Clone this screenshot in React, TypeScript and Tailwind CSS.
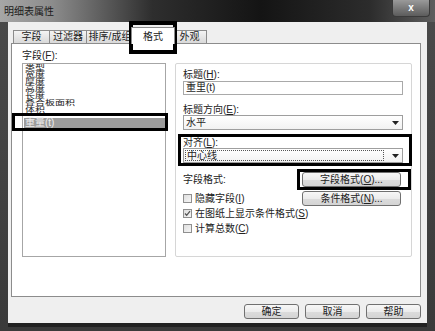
import React from 'react';

const font = "font-['Liberation_Sans','Noto_Sans_CJK_SC',sans-serif]";

const Btn: React.FC<{ label: React.ReactNode; className?: string }> = ({ label, className = '' }) => (
  <div
    className={`h-[15px] flex items-center justify-center rounded-[3px] border border-[#707070] bg-[linear-gradient(180deg,#f7f7f7_0%,#ececec_50%,#dcdcdc_51%,#d4d4d4_100%)] text-[10px] leading-none text-[#222] ${className}`}
  >
    {label}
  </div>
);

const Combo: React.FC<{ value: string; focused?: boolean }> = ({ value, focused }) => (
  <div className="h-[15px] w-full flex items-center border border-[#9e9e9e] bg-[linear-gradient(180deg,#ffffff_0%,#f2f2f2_100%)]">
    <div
      className={`flex-1 h-[11px] ml-[1px] mr-[8px] pl-[1px] flex items-center text-[10px] leading-none text-[#1e1e1e] ${
        focused ? 'border border-dotted border-[#555]' : ''
      }`}
    >
      {value}
    </div>
    <svg width="7" height="4" viewBox="0 0 7 4" className="mr-[3px]">
      <path d="M0 0h7L3.5 4z" fill="#222" />
    </svg>
  </div>
);

const Check: React.FC<{ label: React.ReactNode; checked?: boolean }> = ({ label, checked }) => (
  <div className="h-[15px] flex items-center gap-[3px] text-[10px] leading-none text-[#222]">
    <div className="w-[9px] h-[9px] border border-[#8f8f8f] bg-[linear-gradient(135deg,#dedede_0%,#f6f6f6_100%)] flex items-center justify-center">
      {checked && (
        <svg width="7" height="7" viewBox="0 0 7 7">
          <path d="M1 3.5l1.7 1.8L6 1.2" stroke="#555" strokeWidth="1.3" fill="none" />
        </svg>
      )}
    </div>
    <span>{label}</span>
  </div>
);

const Label: React.FC<{ children: React.ReactNode; className?: string }> = ({ children, className = '' }) => (
  <div className={`h-[11px] leading-[11px] text-[10px] text-[#222] ${className}`}>{children}</div>
);

const tabs = [
  { label: '字段', w: 'w-[36px]' },
  { label: '过滤器', w: 'w-[37px]' },
  { label: '排序/成组', w: 'w-[47px]' },
];

export default function App() {
  const fields = ['类型', '宽度', '厚度', '高度', '长度', '叠合板面积', '体积'];

  return (
    <div className={`relative w-[435px] h-[331px] overflow-hidden bg-[linear-gradient(180deg,#4a4a4a_0%,#3a3a3a_100%)] flex flex-col ${font}`}>
      {/* title bar */}
      <div className="h-[22px] shrink-0 flex items-start justify-between bg-[linear-gradient(90deg,#a6a6a6_0%,#8c8c8c_12%,#2e2e2e_35%,#141414_60%,#2c2c2c_85%,#5e5e5e_100%)]">
        <div className="pl-[4px] pt-[6px] text-[10px] leading-[11px] text-[#1a1a1a]">明细表属性</div>
        <div className="mr-[5px] w-[38px] h-[17px] rounded-b-[4px] border border-t-0 border-[#3a3a3a] bg-[linear-gradient(180deg,#9a9a9a_0%,#7a7a7a_50%,#5c5c5c_100%)] flex items-center justify-center text-white text-[10px] font-bold leading-none">
          x
        </div>
      </div>

      {/* client area */}
      <div className="mx-[8px] h-[301px] bg-[#efefef] flex flex-col pl-[3px] pr-[6px]">
        {/* tabs */}
        <div className="h-[21px] flex items-end pl-[2px]">
          {tabs.map((t) => (
            <div
              key={t.label}
              className={`${t.w} h-[13px] border border-b-0 border-r-0 border-[#8c8c8c] bg-[linear-gradient(180deg,#f4f4f4_0%,#e6e6e6_50%,#d9d9d9_100%)] flex items-center justify-center text-[10px] leading-none text-[#222] overflow-hidden whitespace-nowrap`}
            >
              {t.label}
            </div>
          ))}
          <div className="relative z-10 w-[44px] h-[17px] -mx-[2px] -mb-px border border-b-0 border-[#8c8c8c] bg-white flex items-start pt-[4px] justify-center text-[10px] leading-none text-[#222]">
            格式
          </div>
          <div className="w-[34px] h-[13px] border border-b-0 border-l-0 border-[#8c8c8c] bg-[linear-gradient(180deg,#f4f4f4_0%,#e6e6e6_50%,#d9d9d9_100%)] flex items-center justify-center text-[10px] leading-none text-[#222]">
            外观
          </div>
        </div>

        {/* panel */}
        <div className="h-[254px] border border-[#8c8c8c] bg-white flex gap-[9px] pl-[10px] pt-[6px]">
          <div className="w-[144px] flex flex-col">
            <div className="h-[13px] leading-[11px] text-[10px] text-[#222]">
              字段(<u>F</u>):
            </div>
            <div className="h-[194px] border border-[#a6a6a6] bg-white pl-[1px]">
              <div className="pl-[1px] text-[10px] text-[#222]">
                {fields.map((f) => (
                  <div key={f} className="h-[7px] leading-[7px] whitespace-nowrap">
                    <span className="inline-block origin-center scale-y-[0.68]">{f}</span>
                  </div>
                ))}
              </div>
              <div className="mt-[5px] h-[10px] leading-[10px] bg-[#9c9c9c] text-[10px] text-[#eeeeee] pl-[1px]">
                重量(t)
              </div>
            </div>
          </div>

          <div className="mt-[13px] w-[237px] h-[194px] border border-[#d6d6d6] rounded-[2px] pl-[7px] pr-[8px] pt-[5px] flex flex-col">
            <Label>
              标题(<u>H</u>):
            </Label>
            <div className="mt-[1px] h-[14px] border border-[#a9a9a9] bg-white flex items-center pl-[2px] text-[10px] leading-none text-[#1e1e1e]">
              重里(t)
            </div>
            <Label className="mt-[9px]">
              标题方向(<u>E</u>):
            </Label>
            <Combo value="水平" />
            <Label className="mt-[7px]">
              对齐(<u>L</u>):
            </Label>
            <Combo value="中心线" focused />

            <div className="mt-[9px] h-[15px] flex items-center justify-between">
              <span className="text-[10px] leading-none text-[#222]">字段格式:</span>
              <Btn label={<>字段格式(<u>O</u>)...</>} className="w-[99px] mr-[2px]" />
            </div>
            <div className="mt-[4px] h-[15px] flex items-center justify-between">
              <Check label={<>隐藏字段(<u>I</u>)</>} />
              <Btn label={<>条件格式(<u>N</u>)...</>} className="w-[99px] mr-[2px]" />
            </div>
            <Check label={<>在图纸上显示条件格式(<u>S</u>)</>} checked />
            <Check label={<>计算总数(<u>C</u>)</>} />
          </div>
        </div>

        {/* dialog buttons */}
        <div className="mt-[7px] flex justify-end gap-[6px]">
          <Btn label="确定" className="w-[55px]" />
          <Btn label="取消" className="w-[55px]" />
          <Btn label="帮助" className="w-[55px]" />
        </div>
      </div>
      <div className="mx-[8px] h-[4px] bg-[#222]" />

      {/* annotation highlight boxes */}
      <div className="absolute left-[129px] top-[21px] w-[48px] h-[33px] border-[4px] border-black pointer-events-none" />
      <div className="absolute left-[12px] top-[113px] w-[156px] h-[18px] border-[3px] border-black pointer-events-none" />
      <div className="absolute left-[178px] top-[134px] w-[234px] h-[32px] border-[3px] border-black pointer-events-none" />
      <div className="absolute left-[297px] top-[169px] w-[114px] h-[21px] border-[3px] border-black pointer-events-none" />
    </div>
  );
}
